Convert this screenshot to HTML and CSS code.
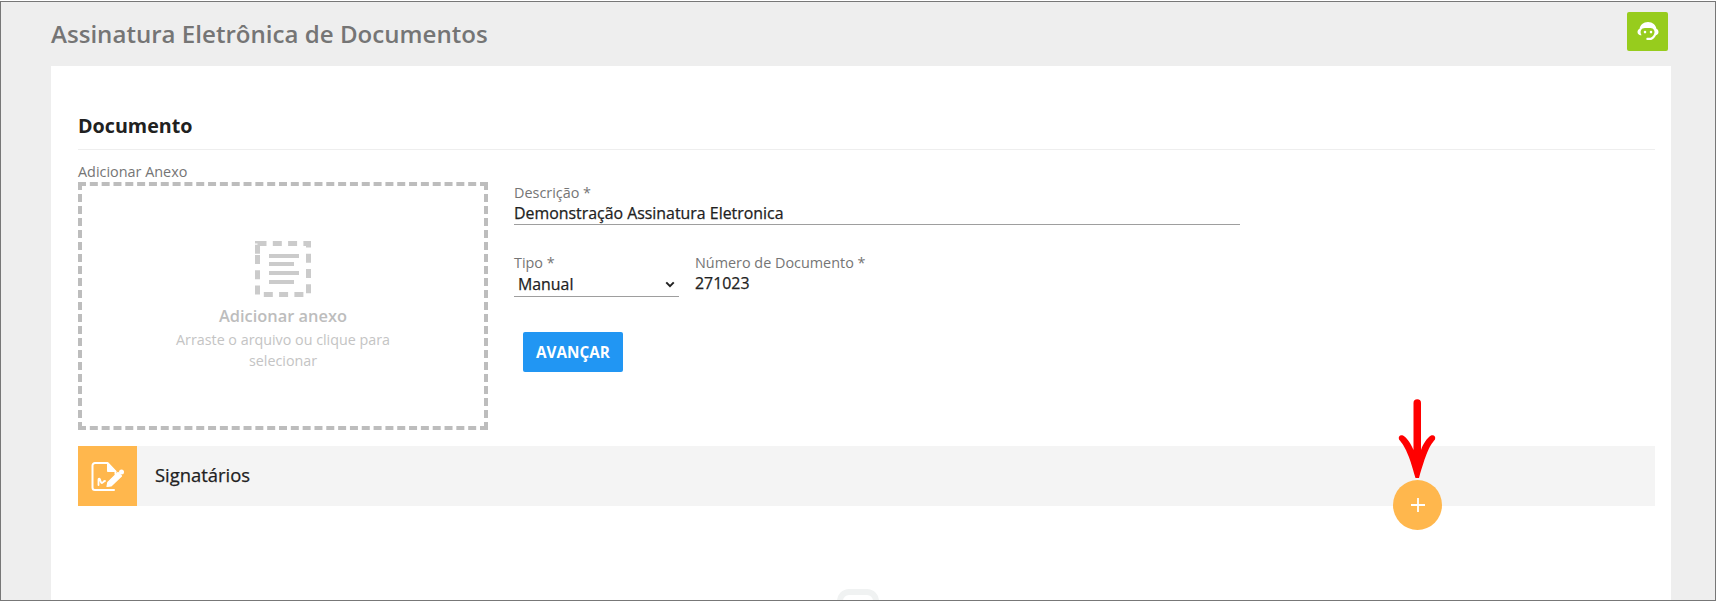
FILE: index.html
```html
<!DOCTYPE html>
<html lang="pt-BR">
<head>
<meta charset="utf-8">
<title>Assinatura Eletrônica de Documentos</title>
<link rel="stylesheet" href="styles.css">
</head>
<body>
<div class="frame">
  <header class="topbar">
    <h1 class="page-title">Assinatura Eletrônica de Documentos</h1>
    <button class="avatar" aria-label="Suporte">
      <svg width="24" height="24" viewBox="0 0 24 24"><path fill="#fff" fill-rule="evenodd" d="M12 2c4.600 0 8 3 8.400 6.800 1.300.5 2.100 1.700 2.100 3.200 0 1.600-1 2.900-2.500 3.200-1 2.200-2.800 3.900-4.800 4.800h-3.700c-.7 0-1.200-.5-1.200-1.100s.5-1.100 1.200-1.100h3c2-.8 3.700-2.700 4-5.200.1-.9-.1-1.700-.5-2.500-.6-1.300-2-2-3.500-2H9c-1.900 0-3.300.7-4 2.100-.4.800-.5 1.600-.4 2.400.1 1 .4 1.900 1 2.700H4.200C2.600 14.900 1.500 13.600 1.500 12c0-1.500.9-2.700 2.100-3.200C4 5 7.400 2 12 2zM9 10.800a1.300 1.300 0 1 0 0 2.600 1.300 1.300 0 0 0 0-2.600zm6 0a1.300 1.300 0 1 0 0 2.600 1.300 1.300 0 0 0 0-2.600z"/></svg>
    </button>
  </header>
  <main class="card">
    <h2 class="section-title">Documento</h2>
    <div class="doc-row">
      <div class="attach">
        <div class="attach-label">Adicionar Anexo</div>
        <div class="dropzone">
          <svg class="drop-icon" width="56" height="56" viewBox="0 0 56 56" fill="none" stroke="#cbcbcb">
            <rect x="2.500" y="2.500" width="51" height="51" stroke-width="5" stroke-dasharray="9 6.300"/>
            <path stroke-width="4" d="M14 15h30M14 23h25M14 32h30M14 41h25"/>
          </svg>
          <div class="drop-title">Adicionar anexo</div>
          <div class="drop-hint">Arraste o arquivo ou clique para selecionar</div>
        </div>
      </div>
      <form class="fields">
        <div class="field field-wide">
          <label class="field-label">Descrição *</label>
          <div class="field-value underlined">Demonstração Assinatura Eletronica</div>
        </div>
        <div class="field-row">
          <div class="field field-type">
            <label class="field-label">Tipo *</label>
            <div class="select underlined">
              <span>Manual</span>
              <svg width="10" height="7" viewBox="0 0 12 8" fill="none" stroke="#222" stroke-width="2.400"><path d="M1.500 1.500 6 6l4.500-4.500"/></svg>
            </div>
          </div>
          <div class="field">
            <label class="field-label">Número de Documento *</label>
            <div class="field-value">271023</div>
          </div>
        </div>
        <button type="button" class="primary">AVANÇAR</button>
      </form>
    </div>
    <section class="signers">
      <div class="signers-icon">
        <svg width="36" height="36" viewBox="0 0 36 36" fill="none" stroke="#fff" stroke-width="2" stroke-linecap="round" stroke-linejoin="round">
          <path d="M24 32H5A2.500 2.500 0 0 1 2.500 29.500V7.500A2.500 2.500 0 0 1 5 5H17.500L25.500 13.500V16"/>
          <path fill="#fff" stroke-width="1" d="M17.500 5v8.500h8z"/>
          <path stroke-width="1.800" d="M8.500 27v-5.500c0-1 1-1 1.500 0 .5 2 1 3.500 2 3.500s1.500-2 3-2"/>
          <path fill="#fff" stroke-width="1.200" d="m17 28.500.8-4L28 14.500l3.500 3.500-10.500 10z"/>
          <circle cx="31.500" cy="14" r="2.500" fill="#fff" stroke="none"/>
        </svg>
      </div>
      <div class="signers-title">Signatários</div>
    </section>
    <div class="empty-state">
      <svg width="44" height="30" viewBox="0 0 44 30" fill="none" stroke="#f0f2f2" stroke-width="6"><rect x="4" y="3" width="36" height="40" rx="9"/></svg>
    </div>
  </main>
  <button class="fab" aria-label="Adicionar signatário">
    <svg width="16" height="16" viewBox="0 0 16 16" stroke="#fff" stroke-width="1.800"><path d="M8 1v14M1 8h14"/></svg>
  </button>
  <svg class="arrow" width="50" height="84" viewBox="0 0 50 84"><path fill="red" d="M21.500 6a3.750 3.750 0 0 1 7.500 0V53C31 47 35 41 39 38.500c3-1 5 1 4 4-6 7-9 14-16 38.500h-3.500C17 57 13 49.500 7 42.500c-1-3 1-5 4-4 4 2 8 8.500 10.500 14.500z"/></svg>
</div>
</body>
</html>
```
FILE: styles.css
```css
* { box-sizing: border-box; }
html, body { margin: 0; padding: 0; background: #fff; }
body { font-family: "Open Sans", "Liberation Sans", sans-serif; padding-top: 1px; }
.frame {
  position: relative;
  height: 600px;
  overflow: hidden;
  background: #eee;
  border: 1px solid #777;
  padding: 0 44px 0 50px;
}
.topbar {
  height: 64px;
  display: flex;
  align-items: flex-start;
  justify-content: space-between;
}
.page-title {
  margin: 15px 0 0;
  font-size: 24.100px;
  line-height: 33px;
  font-weight: 600;
  color: #757575;
}
.avatar {
  margin: 10px 3px 0 0;
  width: 41px;
  height: 39px;
  border: 0;
  border-radius: 2px;
  background: #97cc1d;
  padding: 0;
  display: flex;
  align-items: center;
  justify-content: center;
}
.card {
  background: #fff;
  height: 600px;
  padding: 47px 16px 0 27px;
}
.section-title {
  margin: 0;
  height: 37px;
  font-size: 19.700px;
  line-height: 25px;
  font-weight: 700;
  color: #212121;
  border-bottom: 1px solid #eee;
}
.doc-row { display: flex; gap: 26px; margin-top: 14px; }
.attach { width: 410px; }
.attach-label { height: 18px; font-size: 14.400px; line-height: 16px; color: #757575; }
.dropzone {
  height: 248px;
  border: 4px dashed #bdbdbd;
  display: flex;
  flex-direction: column;
  align-items: center;
  padding: 55px 30px 0;
  text-align: center;
}
.drop-icon { display: block; }
.drop-title { margin-top: 7px; font-size: 16.400px; line-height: 24px; font-weight: 600; color: #bdbdbd; }
.drop-hint { margin-top: 1px; font-size: 14.300px; line-height: 21px; color: #c4c4c4; max-width: 240px; }
.fields { flex: none; width: 726px; padding-top: 19px; }
.field-label { display: block; font-size: 14.400px; line-height: 19px; color: #757575; }
.field-value { font-size: 15.900px; line-height: 22px; font-weight: 400; -webkit-text-stroke: 0.25px #212121; color: #212121; }
.underlined { border-bottom: 1px solid #9e9e9e; }
.field-wide .field-value { height: 23px; }
.field-row { display: flex; gap: 16px; margin-top: 28px; }
.field-type { width: 165px; }
.select {
  display: flex;
  align-items: center;
  justify-content: space-between;
  height: 25px;
  padding: 0 4px 0 4px;
  font-size: 15.900px;
  -webkit-text-stroke: 0.25px #212121;
  color: #212121;
}
.primary {
  display: block;
  margin: 35px 0 0 9px;
  width: 100px;
  height: 40px;
  border: 0;
  border-radius: 2px;
  background: #2196f3;
  color: #fff;
  font: 700 15.300px "Open Sans", sans-serif;
}
.signers {
  display: flex;
  align-items: center;
  height: 60px;
  margin-top: 16px;
  background: #f4f4f4;
}
.signers-icon {
  width: 59px;
  height: 60px;
  background: #ffb74d;
  display: flex;
  align-items: center;
  justify-content: center;
}
.signers-title { margin-left: 18px; font-size: 18.400px; line-height: 22px; margin-bottom: 2px; -webkit-text-stroke: 0.25px #212121; color: #212121; }
.empty-state { display: flex; justify-content: center; margin-top: 83px; padding-right: 18px; }
.fab {
  position: absolute;
  left: 1392px;
  top: 478px;
  width: 49px;
  height: 50px;
  border: 0;
  border-radius: 50%;
  background: #ffb74d;
  padding: 0;
  display: flex;
  align-items: center;
  justify-content: center;
}
.arrow { position: absolute; left: 1391px; top: 395px; }
```
